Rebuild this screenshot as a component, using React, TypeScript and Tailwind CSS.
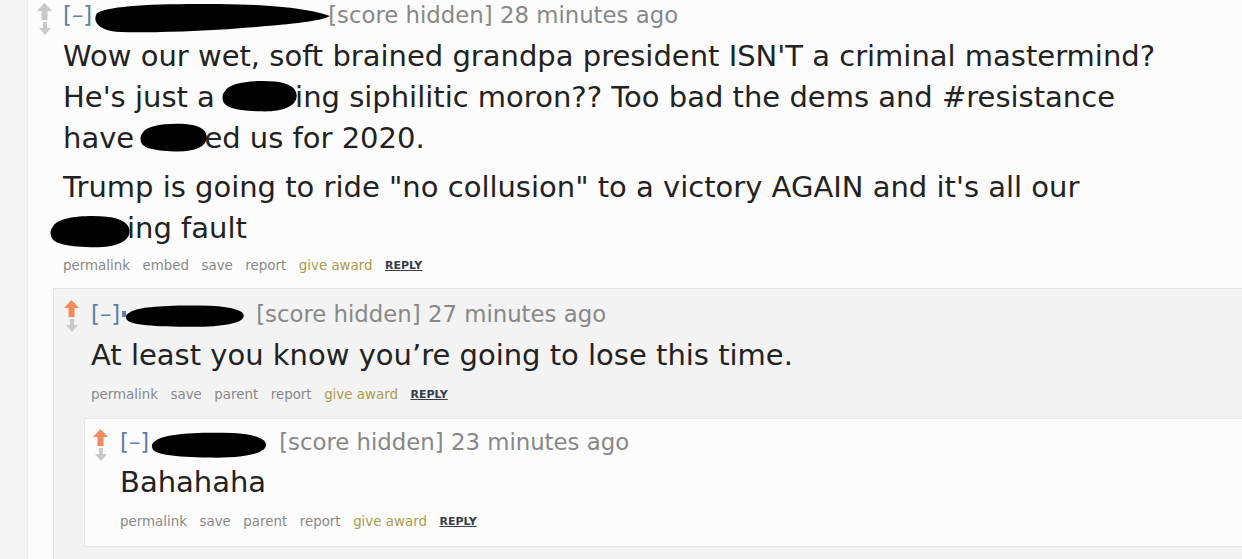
import React from 'react';

const font = { fontFamily: '"DejaVu Sans", Verdana, sans-serif' };

const UpArrow = ({ color }: { color: string }) => (
  <svg width="15" height="17" viewBox="0 0 15 17" className="block">
    <path d="M7.5 0 L15 8 L10.5 8 L10.5 17 L4.5 17 L4.5 8 L0 8 Z" fill={color} />
  </svg>
);

const DownArrow = () => (
  <svg width="12" height="13" viewBox="0 0 12 13" className="block">
    <path d="M4 0 H8 V6 H12 L6 13 L0 6 H4 Z" fill="#c9c9c9" />
  </svg>
);

// black marker scribble laid over redacted words
const Scribble = ({ w, h, left = 0, top = 0, pointed = false }: { w: number; h: number; left?: number; top?: number; pointed?: boolean }) => (
  <svg
    width={w}
    height={h}
    viewBox="0 0 100 40"
    preserveAspectRatio="none"
    className="absolute"
    style={{ left, top }}
  >
    {pointed ? (
      <path d="M2 14 C6 4, 30 1, 62 3 C80 4, 94 10, 100 17 C97 22, 88 26, 70 30 C50 35, 25 38, 10 36 C3 34, 0 24, 2 14 Z" fill="#000" />
    ) : (
      <path d="M4 14 C10 4, 40 1, 70 3 C90 5, 100 12, 98 22 C96 32, 80 39, 50 38 C20 37, 2 34, 1 24 C0 19, 2 16, 4 14 Z" fill="#000" />
    )}
  </svg>
);

// redacted word: blob over the first part, rest of the word stays visible
const Redacted = ({ rest, span, w, h, left, top }: { rest: string; span: number; w: number; h: number; left: number; top: number }) => (
  <span className="whitespace-nowrap">
    <span className="relative inline-block align-baseline text-transparent" style={{ width: span }}>
      fuck
      <Scribble w={w} h={h} left={left} top={top} />
    </span>
    {rest}
  </span>
);

const Tagline = ({ user, time }: { user: React.ReactNode; time: string }) => (
  <div className="flex h-[30px] items-center whitespace-nowrap text-[22.8px] leading-[30px] text-[#888]">
    <span className="text-[#5f7fa6]">[–]</span>
    {user}
    <span>[score hidden] {time}</span>
  </div>
);

const Actions = ({ items }: { items: string[] }) => (
  <ul className="flex h-[18px] items-center gap-[12.5px] text-[13.4px] leading-[18px] text-[#888]">
    {items.map((item) => (
      <li key={item}>{item}</li>
    ))}
    <li className="text-[#a89b4b]">give award</li>
    <li className="text-[11px] font-bold uppercase text-[#353d48] underline">reply</li>
  </ul>
);

const Votes = ({ upColor, pad }: { upColor: string; pad: string }) => (
  <div className={`flex shrink-0 flex-col items-start ${pad}`}>
    <UpArrow color={upColor} />
    <div className="ml-[1.5px] mt-[2px]">
      <DownArrow />
    </div>
  </div>
);

export default function App() {
  return (
    <div className="flex h-[559px] w-[1242px] overflow-hidden bg-[#fcfcfc] text-[#222]" style={font}>
      <div className="w-[28px] shrink-0 border-r border-[#ececec] bg-[#f4f4f4]" />

      <div className="min-w-0 flex-1">
        {/* top level comment */}
        <div className="flex">
          <Votes upColor="#c8c8c8" pad="w-[35px] pl-[9px] pt-[3px]" />
          <div className="min-w-0 flex-1">
            <Tagline
              time="28 minutes ago"
              user={
                <span className="relative ml-[-2px] inline-block h-[30px] w-[238px]">
                  <Scribble w={238} h={33} left={2} top={2} pointed />
                </span>
              }
            />
            <div className="mt-[6px] max-w-[1112px] text-[29px] leading-[41px]">
              <p>
                Wow our wet, soft brained grandpa president ISN'T a criminal mastermind? He's just a{' '}
                <Redacted rest="ing" span={71} w={76} h={34} left={-2} top={2} /> siphilitic moron?? Too bad the dems and #resistance have{' '}
                <Redacted rest="ed" span={61} w={68} h={31} left={-3} top={4} /> us for 2020.
              </p>
              <p className="mt-[8px]">
                Trump is going to ride "no collusion" to a victory AGAIN and it's all our{' '}
                <Redacted rest="ing" span={64} w={81} h={35} left={-13} top={6} /> fault
              </p>
            </div>
            <div className="mt-[8px]">
              <Actions items={['permalink', 'embed', 'save', 'report']} />
            </div>
          </div>
        </div>

        {/* child */}
        <div className="ml-[25px] mt-[13px] border-l border-t border-[#e4e4e4] bg-[#f3f3f3] pb-[20px]">
          <div className="flex pt-[10px]">
            <Votes upColor="#f58a5c" pad="w-[37px] pl-[10px] pt-[1px]" />
            <div className="min-w-0 flex-1">
              <Tagline
                time="27 minutes ago"
                user={
                  <span className="relative ml-[2px] mr-[10px] inline-block h-[30px] w-[124px]">
                    <span className="absolute left-0 top-[12px] h-[6px] w-[4px] bg-[#5f7fa6]" />
                    <Scribble w={121} h={24} left={3} top={5} />
                  </span>
                }
              />
              <p className="mt-[6px] text-[29px] leading-[41px]">At least you know you’re going to lose this time.</p>
              <div className="mt-[10px]">
                <Actions items={['permalink', 'save', 'parent', 'report']} />
              </div>
            </div>
          </div>

          {/* grandchild */}
          <div className="ml-[30px] mt-[14px] border-y border-l border-[#e6e6e6] bg-[#fcfcfc] pb-[15px]">
            <div className="flex pt-[8px]">
              <Votes upColor="#f58a5c" pad="w-[35px] pl-[8px] pt-[2px]" />
              <div className="min-w-0 flex-1">
                <Tagline
                  time="23 minutes ago"
                  user={
                    <span className="relative ml-[2px] mr-[10px] inline-block h-[30px] w-[118px]">
                      <Scribble w={117} h={28} left={0} top={4} />
                    </span>
                  }
                />
                <p className="mt-[5px] text-[29px] leading-[41px]">Bahahaha</p>
                <div className="mt-[10px]">
                  <Actions items={['permalink', 'save', 'parent', 'report']} />
                </div>
              </div>
            </div>
          </div>
        </div>
      </div>
    </div>
  );
}
